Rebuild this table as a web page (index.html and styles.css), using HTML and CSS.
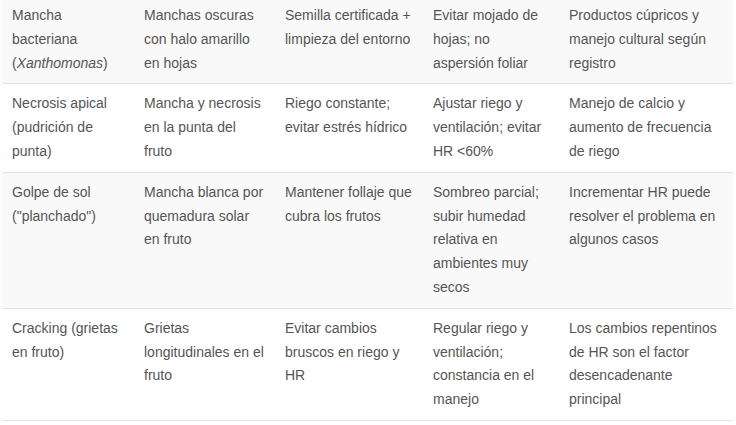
FILE: index.html
```html
<!DOCTYPE html>
<html lang="es">
<head>
<meta charset="utf-8">
<link rel="stylesheet" href="styles.css">
</head>
<body>
<table class="tbl">
  <colgroup>
    <col class="c1"><col class="c2"><col class="c3"><col class="c4"><col class="c5">
  </colgroup>
  <tbody>
    <tr class="odd">
      <td>Mancha bacteriana (<em>Xanthomonas</em>)</td>
      <td>Manchas oscuras con halo amarillo en hojas</td>
      <td>Semilla certificada + limpieza del entorno</td>
      <td>Evitar mojado de hojas; no aspersión foliar</td>
      <td>Productos cúpricos y manejo cultural según registro</td>
    </tr>
    <tr>
      <td>Necrosis apical (pudrición de punta)</td>
      <td>Mancha y necrosis en la punta del fruto</td>
      <td>Riego constante; evitar estrés hídrico</td>
      <td>Ajustar riego y ventilación; evitar HR &lt;60%</td>
      <td>Manejo de calcio y aumento de frecuencia de riego</td>
    </tr>
    <tr class="odd">
      <td>Golpe de sol ("planchado")</td>
      <td>Mancha blanca por quemadura solar en fruto</td>
      <td>Mantener follaje que cubra los frutos</td>
      <td>Sombreo parcial; subir humedad relativa en ambientes muy secos</td>
      <td>Incrementar HR puede resolver el problema en algunos casos</td>
    </tr>
    <tr>
      <td>Cracking (grietas en fruto)</td>
      <td>Grietas longitudinales en el fruto</td>
      <td>Evitar cambios bruscos en riego y HR</td>
      <td>Regular riego y ventilación; constancia en el manejo</td>
      <td>Los cambios repentinos de HR son el factor desencadenante principal</td>
    </tr>
  </tbody>
</table>
</body>
</html>
```
FILE: styles.css
```css
html, body {
  margin: 0;
  padding: 0;
  background: #ffffff;
}
body {
  padding: 0 3px 0 2px;
  font-family: "Liberation Sans", Arial, sans-serif;
  font-size: 14px;
  color: #555555;
}
.tbl {
  width: 731px;
  margin-top: -4px;
  border-collapse: collapse;
  table-layout: fixed;
}
.c1 { width: 132px; }
.c2 { width: 141px; }
.c3 { width: 148px; }
.c4 { width: 136px; }
.c5 { width: 174px; }
.tbl td {
  padding: 8px 10px;
  line-height: 23.8px;
  vertical-align: top;
  border-bottom: 1px solid #e3e3e3;
}
.tbl tr.odd td {
  background: #f9f9f9;
}
.tbl em {
  font-style: italic;
}
```
